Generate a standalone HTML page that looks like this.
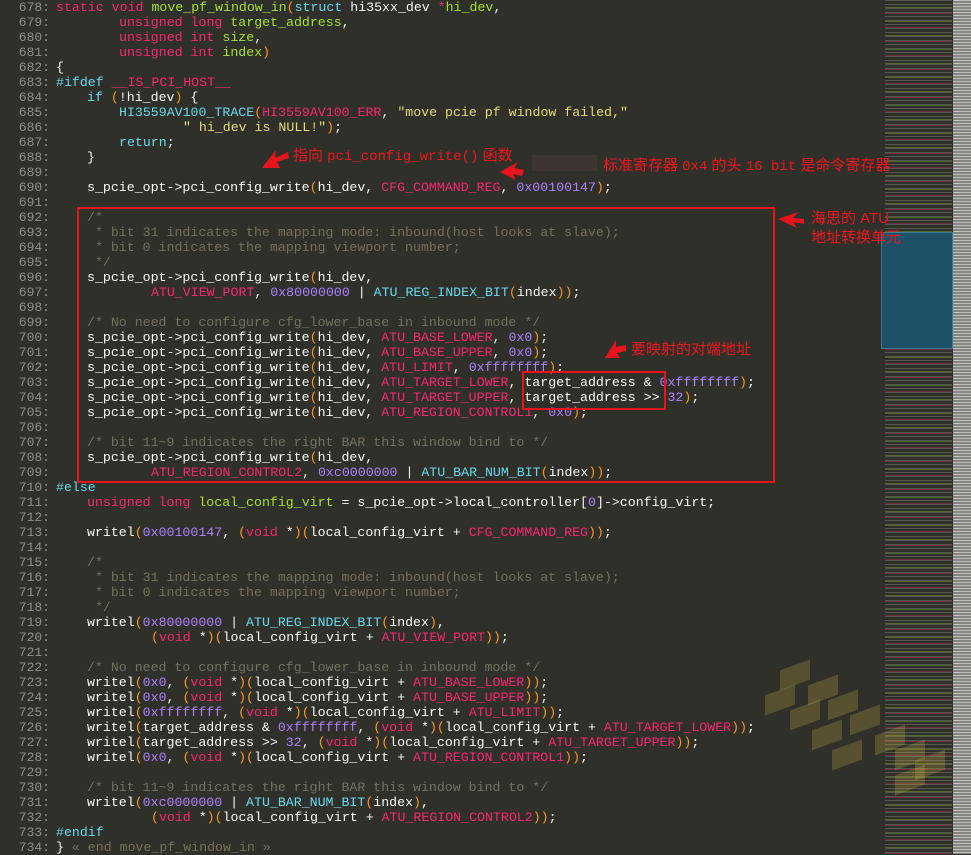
<!DOCTYPE html>
<html><head><meta charset="utf-8"><style>
body{margin:0;width:971px;height:854px;overflow:hidden;background:#30302b;font-family:"Liberation Mono",monospace;font-size:13.25px;position:relative}
.l{position:absolute;left:0;height:15px;line-height:15px;white-space:pre;color:#f8f8f2;width:880px}
.g{position:absolute;left:8px;width:42px;text-align:right;color:#8f908a;font-size:13px}
.c0{position:absolute;left:56px}
.k{color:#f92672}.t{color:#a6e22e}.f{color:#66d9ef}.n{color:#ae81ff}.p{color:#fd971f}.c{color:#75715e}.s{color:#e6db74}
.red{position:absolute;border:2px solid #e8141c}
.ann{position:absolute;color:#f0161c;font-family:"Liberation Sans","Noto Sans CJK SC",sans-serif;font-size:15px;white-space:nowrap}
.mono{font-family:"Liberation Mono",monospace;font-size:14px}
.mm{position:absolute;left:885px;top:0;width:67px;height:854px;background:repeating-linear-gradient(180deg,rgba(200,200,190,.25) 0 1px,transparent 1px 4px)}
.sb{position:absolute;left:953px;top:0;width:18px;height:854px;background:#858581;background-image:repeating-linear-gradient(180deg,rgba(230,230,225,.6) 0 1px,transparent 1px 3px)}
.vp{position:absolute;left:881px;top:232px;width:70px;height:115px;background:#1e5068;border:1px solid #3a7a96}
.sign{position:absolute;width:30px;height:20px;background:rgba(190,170,60,.28);transform:skewY(-20deg)}
</style></head><body>
<div class="mm"></div>
<div class="mm" style="background:repeating-linear-gradient(180deg,transparent 0 7px,rgba(166,226,46,.3) 7px 8px,transparent 8px 13px,rgba(249,38,114,.3) 13px 14px);"></div>
<div class="sb"></div>
<div class="vp"></div>
<div class="sign" style="left:780px;top:665px"></div>
<div class="sign" style="left:808px;top:680px"></div>
<div class="sign" style="left:828px;top:695px"></div>
<div class="sign" style="left:850px;top:710px"></div>
<div class="sign" style="left:765px;top:690px"></div>
<div class="sign" style="left:790px;top:705px"></div>
<div class="sign" style="left:812px;top:725px"></div>
<div class="sign" style="left:832px;top:745px"></div>
<div class="sign" style="left:875px;top:730px"></div>
<div class="sign" style="left:895px;top:745px"></div>
<div class="sign" style="left:915px;top:755px"></div>
<div class="sign" style="left:895px;top:770px"></div>

<div id="code"></div>
<script>
const L=[
[678,0,'<span class="k">static</span> <span class="k">void</span> <span class="t">move_pf_window_in</span><span class="p">(</span><span class="f">struct</span> hi35xx_dev <span class="k">*</span><span class="t">hi_dev</span>,'],
[679,63,'<span class="k">unsigned</span> <span class="k">long</span> <span class="t">target_address</span>,'],
[680,63,'<span class="k">unsigned</span> <span class="k">int</span> <span class="t">size</span>,'],
[681,63,'<span class="k">unsigned</span> <span class="k">int</span> <span class="t">index</span><span class="p">)</span>'],
[682,0,'{'],
[683,0,'<span class="f">#ifdef</span> <span class="k">__IS_PCI_HOST__</span>'],
[684,31,'<span class="f">if</span> <span class="p">(</span>!hi_dev<span class="p">)</span> {'],
[685,63,'<span class="f">HI3559AV100_TRACE</span><span class="p">(</span><span class="k">HI3559AV100_ERR</span>, <span class="s">"move pcie pf window failed,"</span>'],
[686,127,'<span class="s">" hi_dev is NULL!"</span><span class="p">)</span>;'],
[687,63,'<span class="f">return</span>;'],
[688,31,'}'],
[689,0,''],
[690,31,'s_pcie_opt-&gt;pci_config_write<span class="p">(</span>hi_dev, <span class="k">CFG_COMMAND_REG</span>, <span class="n">0x00100147</span><span class="p">)</span>;'],
[691,0,''],
[692,31,'<span class="c">/*</span>'],
[693,31,'<span class="c"> * bit 31 indicates the mapping mode: inbound(host looks at slave);</span>'],
[694,31,'<span class="c"> * bit 0 indicates the mapping viewport number;</span>'],
[695,31,'<span class="c"> */</span>'],
[696,31,'s_pcie_opt-&gt;pci_config_write<span class="p">(</span>hi_dev,'],
[697,95,'<span class="k">ATU_VIEW_PORT</span>, <span class="n">0x80000000</span> | <span class="f">ATU_REG_INDEX_BIT</span><span class="p">(</span>index<span class="p">))</span>;'],
[698,0,''],
[699,31,'<span class="c">/* No need to configure cfg_lower_base in inbound mode */</span>'],
[700,31,'s_pcie_opt-&gt;pci_config_write<span class="p">(</span>hi_dev, <span class="k">ATU_BASE_LOWER</span>, <span class="n">0x0</span><span class="p">)</span>;'],
[701,31,'s_pcie_opt-&gt;pci_config_write<span class="p">(</span>hi_dev, <span class="k">ATU_BASE_UPPER</span>, <span class="n">0x0</span><span class="p">)</span>;'],
[702,31,'s_pcie_opt-&gt;pci_config_write<span class="p">(</span>hi_dev, <span class="k">ATU_LIMIT</span>, <span class="n">0xffffffff</span><span class="p">)</span>;'],
[703,31,'s_pcie_opt-&gt;pci_config_write<span class="p">(</span>hi_dev, <span class="k">ATU_TARGET_LOWER</span>, target_address &amp; <span class="n">0xffffffff</span><span class="p">)</span>;'],
[704,31,'s_pcie_opt-&gt;pci_config_write<span class="p">(</span>hi_dev, <span class="k">ATU_TARGET_UPPER</span>, target_address &gt;&gt; <span class="n">32</span><span class="p">)</span>;'],
[705,31,'s_pcie_opt-&gt;pci_config_write<span class="p">(</span>hi_dev, <span class="k">ATU_REGION_CONTROL1</span>, <span class="n">0x0</span><span class="p">)</span>;'],
[706,0,''],
[707,31,'<span class="c">/* bit 11~9 indicates the right BAR this window bind to */</span>'],
[708,31,'s_pcie_opt-&gt;pci_config_write<span class="p">(</span>hi_dev,'],
[709,95,'<span class="k">ATU_REGION_CONTROL2</span>, <span class="n">0xc0000000</span> | <span class="f">ATU_BAR_NUM_BIT</span><span class="p">(</span>index<span class="p">))</span>;'],
[710,0,'<span class="f">#else</span>'],
[711,31,'<span class="k">unsigned</span> <span class="k">long</span> <span class="t">local_config_virt</span> = s_pcie_opt-&gt;local_controller[<span class="n">0</span>]-&gt;config_virt;'],
[712,0,''],
[713,31,'writel<span class="p">(</span><span class="n">0x00100147</span>, <span class="p">(</span><span class="k">void</span> *<span class="p">)(</span>local_config_virt + <span class="k">CFG_COMMAND_REG</span><span class="p">))</span>;'],
[714,0,''],
[715,31,'<span class="c">/*</span>'],
[716,31,'<span class="c"> * bit 31 indicates the mapping mode: inbound(host looks at slave);</span>'],
[717,31,'<span class="c"> * bit 0 indicates the mapping viewport number;</span>'],
[718,31,'<span class="c"> */</span>'],
[719,31,'writel<span class="p">(</span><span class="n">0x80000000</span> | <span class="f">ATU_REG_INDEX_BIT</span><span class="p">(</span>index<span class="p">)</span>,'],
[720,95,'<span class="p">(</span><span class="k">void</span> *<span class="p">)(</span>local_config_virt + <span class="k">ATU_VIEW_PORT</span><span class="p">))</span>;'],
[721,0,''],
[722,31,'<span class="c">/* No need to configure cfg_lower_base in inbound mode */</span>'],
[723,31,'writel<span class="p">(</span><span class="n">0x0</span>, <span class="p">(</span><span class="k">void</span> *<span class="p">)(</span>local_config_virt + <span class="k">ATU_BASE_LOWER</span><span class="p">))</span>;'],
[724,31,'writel<span class="p">(</span><span class="n">0x0</span>, <span class="p">(</span><span class="k">void</span> *<span class="p">)(</span>local_config_virt + <span class="k">ATU_BASE_UPPER</span><span class="p">))</span>;'],
[725,31,'writel<span class="p">(</span><span class="n">0xffffffff</span>, <span class="p">(</span><span class="k">void</span> *<span class="p">)(</span>local_config_virt + <span class="k">ATU_LIMIT</span><span class="p">))</span>;'],
[726,31,'writel<span class="p">(</span>target_address &amp; <span class="n">0xffffffff</span>, <span class="p">(</span><span class="k">void</span> *<span class="p">)(</span>local_config_virt + <span class="k">ATU_TARGET_LOWER</span><span class="p">))</span>;'],
[727,31,'writel<span class="p">(</span>target_address &gt;&gt; <span class="n">32</span>, <span class="p">(</span><span class="k">void</span> *<span class="p">)(</span>local_config_virt + <span class="k">ATU_TARGET_UPPER</span><span class="p">))</span>;'],
[728,31,'writel<span class="p">(</span><span class="n">0x0</span>, <span class="p">(</span><span class="k">void</span> *<span class="p">)(</span>local_config_virt + <span class="k">ATU_REGION_CONTROL1</span><span class="p">))</span>;'],
[729,0,''],
[730,31,'<span class="c">/* bit 11~9 indicates the right BAR this window bind to */</span>'],
[731,31,'writel<span class="p">(</span><span class="n">0xc0000000</span> | <span class="f">ATU_BAR_NUM_BIT</span><span class="p">(</span>index<span class="p">)</span>,'],
[732,95,'<span class="p">(</span><span class="k">void</span> *<span class="p">)(</span>local_config_virt + <span class="k">ATU_REGION_CONTROL2</span><span class="p">))</span>;'],
[733,0,'<span class="f">#endif</span>'],
[734,0,'} <span class="c">« end move_pf_window_in »</span>']
];
let h='';
L.forEach((r,i)=>{h+='<div class="l" style="top:'+(i*15)+'px"><span class="g">'+r[0]+':</span><span class="c0" style="left:'+(56+r[1])+'px">'+r[2]+'</span></div>';});
document.getElementById('code').innerHTML=h;
</script>

<div class="red" style="left:77px;top:207px;width:694px;height:272px"></div>
<div class="red" style="left:522px;top:371px;width:140px;height:35px"></div>

<svg style="position:absolute;left:0;top:0" width="971" height="854">
<g fill="#e8141c">
<polygon points="262,168 276,150 275,158 288,152 289,158 277,162 280,168"/>
<polygon points="500,172 518,162 514,168 524,170 522,176 513,174 516,180"/>
<polygon points="778,219 798,212 793,218 804,219 804,224 793,222 797,228"/>
<polygon points="605,358 616,340 616,347 626,345 626,351 617,353 620,358"/>
</g>
<rect x="532" y="155" width="65" height="16" fill="#3e3431"/>
</svg>
<div class="ann" style="left:293px;top:144px">指向 <span class="mono">pci_config_write()</span> 函数</div>
<div class="ann" style="left:603px;top:154px">标准寄存器 <span class="mono">0x4</span> 的头 <span class="mono">16 bit</span> 是命令寄存器</div>
<div class="ann" style="left:811px;top:209px;line-height:19px">海思的 ATU<br>地址转换单元</div>
<div class="ann" style="left:631px;top:338px">要映射的对端地址</div>
</body></html>
